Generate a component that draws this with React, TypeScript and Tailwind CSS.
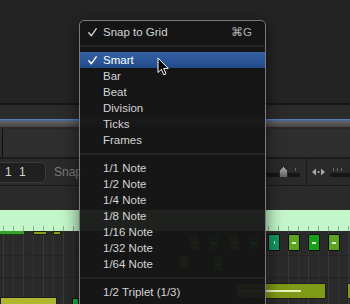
import React from "react";

type Item = { label: string; checked?: boolean; active?: boolean; shortcut?: string } | "sep";

const items: Item[] = [
  { label: "Snap to Grid", checked: true, shortcut: "⌘G" },
  "sep",
  { label: "Smart", checked: true, active: true },
  { label: "Bar" },
  { label: "Beat" },
  { label: "Division" },
  { label: "Ticks" },
  { label: "Frames" },
  "sep",
  { label: "1/1 Note" },
  { label: "1/2 Note" },
  { label: "1/4 Note" },
  { label: "1/8 Note" },
  { label: "1/16 Note" },
  { label: "1/32 Note" },
  { label: "1/64 Note" },
  "sep",
  { label: "1/2 Triplet (1/3)" },
];

const gridX = [
  ...Array.from({ length: 8 }, (_, i) => 3 + i * 10),
  ...Array.from({ length: 27 }, (_, i) => 88 + i * 10),
];

const boxes = [
  { x: 188, y: 3, c: "#5ca41f" },
  { x: 208, y: 3, c: "#17a019" },
  { x: 228, y: 3, c: "#5ca41f" },
  { x: 248, y: 3, c: "#17a019" },
  { x: 268, y: 3, c: "#14985e", tick: true },
  { x: 288, y: 3, c: "#5ca41f" },
  { x: 308, y: 3, c: "#17a019" },
  { x: 328, y: 3, c: "#5ca41f" },
  { x: 178, y: 24, c: "#5ca41f" },
  { x: 212, y: 24, c: "#17a019" },
];

function Check({ white }: { white?: boolean }) {
  return (
    <svg width="9" height="9" viewBox="0 0 9 9" className="shrink-0">
      <path
        d="M0.8 4.8 L3.3 7.8 L8.2 0.8"
        fill="none"
        stroke={white ? "#ffffff" : "#cfcfcf"}
        strokeWidth="1.4"
        strokeLinecap="round"
        strokeLinejoin="round"
      />
    </svg>
  );
}

function Cursor() {
  return (
    <svg width="13" height="20" viewBox="0 0 13 20" className="absolute left-[77px] top-[36px]">
      <path
        d="M1 1 L1 15.5 L4.4 12.3 L6.8 17.8 L9 16.8 L6.7 11.4 L11.2 11.4 Z"
        fill="#000"
        stroke="#fff"
        strokeWidth="1"
        strokeLinejoin="round"
      />
    </svg>
  );
}

function Menu() {
  return (
    <div className="absolute left-[79px] top-[20px] h-[300px] w-[187px] rounded-t-[5px] border border-[#7a7a7a] bg-[rgba(21,21,21,0.95)] pt-[3px] shadow-[0_4px_18px_rgba(0,0,0,0.55)]">
      {items.map((it, i) =>
        it === "sep" ? (
          <div key={i} className="flex h-[12px] items-center">
            <div className="h-[2px] w-full bg-[#232323]" />
          </div>
        ) : (
          <div
            key={i}
            className={
              "flex h-[16px] items-center pr-[13px] pt-px " +
              (it.active
                ? "bg-[linear-gradient(#3563a4,#224a8a)] text-white"
                : "text-[#d4d4d4]")
            }
          >
            <div className="flex w-[23px] justify-center pl-[2px]">
              {it.checked && <Check white={it.active} />}
            </div>
            <span className="flex-1 text-[11.5px] leading-none">{it.label}</span>
            {it.shortcut && (
              <span className="text-[11.5px] leading-none text-[#b4b4b4]">{it.shortcut}</span>
            )}
          </div>
        )
      )}
      <Cursor />
    </div>
  );
}

function Thumb() {
  return (
    <svg width="9" height="12" viewBox="0 0 9 12">
      <defs>
        <linearGradient id="th" x1="0" y1="0" x2="0" y2="1">
          <stop offset="0" stopColor="#b0b0b0" />
          <stop offset="1" stopColor="#5e5e5e" />
        </linearGradient>
      </defs>
      <path d="M4.5 0.5 L8.5 4.5 L8.5 11.5 L0.5 11.5 L0.5 4.5 Z" fill="url(#th)" stroke="#222" strokeWidth="0.8" />
    </svg>
  );
}

function NudgeIcon() {
  return (
    <svg width="13" height="8" viewBox="0 0 13 8">
      <path d="M0 4 L4 0.5 L4 7.5 Z" fill="#a8a8a8" />
      <path d="M13 4 L9 0.5 L9 7.5 Z" fill="#a8a8a8" />
      <rect x="5.6" y="3" width="1.8" height="2" fill="#a8a8a8" />
    </svg>
  );
}

export default function App() {
  return (
    <div className="relative h-[304px] w-[350px] overflow-hidden bg-[#242424] font-['Liberation_Sans',Arial,sans-serif]">
      <div className="h-[103px] bg-[#242424]" />
      <div className="h-[2px] bg-[#161616]" />
      <div className="h-[14px] bg-[#2b2b2b]" />
      <div className="h-[2px] bg-[linear-gradient(#6084c0,#3d5f98)]" />
      <div className="h-[6px] bg-[linear-gradient(#646464,#474747)]" />
      <div className="h-[2px] bg-[#282828]" />
      <div className="flex h-[28px] bg-[#2e2e2e]">
        <div className="ml-[2px] w-px bg-[#0c0c0c]" />
      </div>
      <div className="h-[2px] bg-[#1b1b1b]" />

      {/* toolbar */}
      <div className="flex h-[26px] items-center justify-between bg-[#2a2a2a]">
        <div className="flex items-center">
          <div className="ml-[-8px] flex h-[21px] w-[54px] items-center rounded-[5px] border border-[#3c3c3c] bg-[#202020] pl-[12px] text-[12px] tracking-[2px] text-[#d4d4d4]">
            1 1
          </div>
          <span className="ml-[8px] text-[12px] text-[#7c7c7c]">Snap</span>
        </div>
        <div className="flex h-full items-center">
          <div className="flex flex-col items-start">
            <div className="relative h-[4px] w-[60px]">
              <div className="absolute left-[25px] top-0 h-[3px] w-px bg-[#6a6a6a]" />
              <div className="absolute left-[59px] top-0 h-[3px] w-px bg-[#6a6a6a]" />
            </div>
            <div className="relative mt-[1px] flex h-[4px] w-[64px] items-center rounded-full bg-[#151515]">
              <div className="absolute left-[43px] top-[-7px]">
                <Thumb />
              </div>
            </div>
          </div>
          <div className="mx-[5px] ml-[6px] h-full w-px bg-[#1a1a1a]" />
          <NudgeIcon />
          <div className="ml-[5px] flex flex-col">
            <div className="flex h-[4px] gap-[3px] pl-[3px]">
              <div className="h-[3px] w-px bg-[#6a6a6a]" />
              <div className="h-[3px] w-px bg-[#6a6a6a]" />
              <div className="h-[3px] w-px bg-[#6a6a6a]" />
            </div>
            <div className="mt-[1px] h-[4px] w-[20px] rounded-l-full bg-[#151515]" />
          </div>
        </div>
      </div>
      <div className="h-px bg-[#1a1a1a]" />
      <div className="h-[24px] bg-[#2b2b2b]" />

      {/* ruler band */}
      <div className="relative h-[21px] bg-[#c3f6c9]">
        {gridX.map((x) => (
          <div key={x} className="absolute bottom-0 h-[5px] w-px bg-[#8fae95]" style={{ left: x }} />
        ))}
      </div>

      {/* piano roll */}
      <div className="relative h-[73px] bg-[#2a2a2a]">
        {gridX.map((x, i) => (
          <div
            key={x}
            className={"absolute inset-y-0 w-px " + (i % 2 ? "bg-[#343434]" : "bg-[#3b3b3b]")}
            style={{ left: x }}
          />
        ))}
        <div className="absolute inset-x-0 top-[24px] h-px bg-[#262626]" />
        <div className="absolute inset-x-0 top-[46px] h-px bg-[#232323]" />

        <div className="absolute left-0 top-0 h-[4px] w-[24px] border-b border-[#184010] bg-[#38a02a]" />
        <div className="absolute left-[33px] top-0 h-[4px] w-[14px] border border-[#1e2208] bg-[#8c9c1e]" />
        <div className="absolute left-[53px] top-0 h-[4px] w-[8px] border border-[#1e2208] bg-[#8c9c1e]" />

        {boxes.map((b) => (
          <div
            key={b.x + "-" + b.y}
            className="absolute flex h-[17px] w-[12px] items-center justify-center rounded-[1px] border border-[#0d0d0d]"
            style={{ left: b.x, top: b.y, backgroundColor: b.c }}
          >
            {b.tick ? (
              <div className="h-[3px] w-px bg-[#d8f2dc]" />
            ) : (
              <div className="h-[2px] w-[4px] bg-[#dff2cf]" />
            )}
          </div>
        ))}

        <div className="absolute left-[236px] top-[52px] h-[16px] w-[90px] border border-[#1c1c1c] bg-[#7f9a17]">
          <div className="mt-[6px] h-[2px] w-[64px] bg-[#eaf4b6]" />
        </div>
        <div className="absolute left-[347px] top-[52px] h-[16px] w-[20px] border border-[#1c1c1c] bg-[#7f9a17]" />

        <div className="absolute left-0 top-[66px] h-[8px] w-[57px] border border-[#1c1c1c] bg-[#aeb72e]" />
        <div className="absolute left-[72px] top-[67px] h-[8px] w-[7px] border border-[#0f0f0f] bg-[#1cb040]" />
      </div>

      <Menu />
    </div>
  );
}
